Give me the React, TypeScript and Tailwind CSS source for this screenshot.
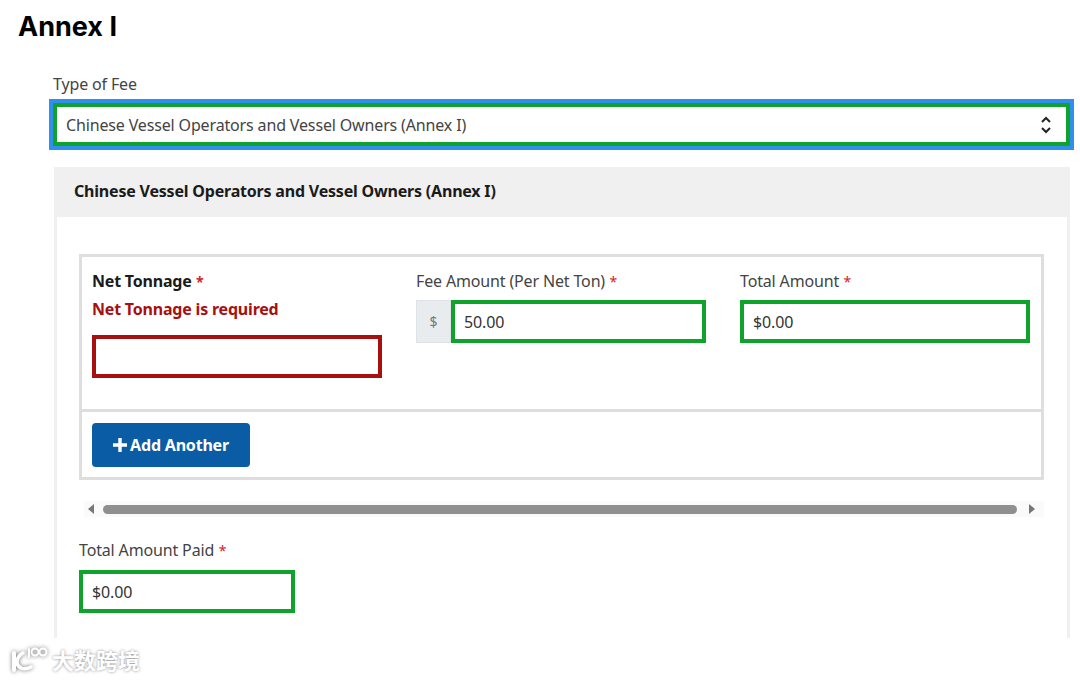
import React from "react";

const font = "font-['Noto_Sans',sans-serif]";
const greenInput =
  "flex items-center h-[43px] border-[4px] border-[#0fa32b] bg-white pl-[9px] text-[16px] tracking-[-0.15px] text-[#333]";
const plainLabel = "text-[16px] leading-[24px] tracking-[-0.15px] text-[#444]";

function Star() {
  return <span className="ml-[1px] text-[14px] leading-none text-[#d5222a]"> *</span>;
}

function Watermark() {
  return (
    <div className="absolute left-[9px] top-[645px] flex items-center gap-[3px]">
      <svg width="40" height="28" viewBox="0 0 40 28" fill="none" className="drop-shadow-[0_0_2px_#777]">
        <path d="M5 8v17" stroke="#fff" strokeWidth="4" strokeLinecap="round" />
        <path d="M14 8C7 12 6 20 12 23c3 1.500 7 0.500 10-1" stroke="#fff" strokeWidth="3.500" strokeLinecap="round" />
        <path d="M20 4v8" stroke="#fff" strokeWidth="2" strokeLinecap="round" />
        <circle cx="26" cy="7" r="3.500" stroke="#fff" strokeWidth="2" />
        <circle cx="34" cy="7" r="3.500" stroke="#fff" strokeWidth="2" />
      </svg>
      <span className="font-['Noto_Sans_CJK_SC',sans-serif] text-[22px] leading-none text-white font-bold [text-shadow:0_0_3px_#888]">
        大数跨境
      </span>
    </div>
  );
}

export default function App() {
  return (
    <div className={`relative w-[1080px] h-[680px] overflow-hidden bg-white ${font}`}>
      <h1 className="pl-[18px] pt-[11px] h-[71px] font-['Inter',sans-serif] text-[27px] leading-[32px] font-bold text-black">
        Annex I
      </h1>

      <div className="pl-[49px] pr-[6px]">
        <label className={`block pl-[4px] pt-[1px] h-[28px] ${plainLabel}`}>Type of Fee</label>
        <div className="border-[4px] border-[#2f8fee] h-[51px] w-[1025px]">
          <div className="flex items-center justify-between h-full border-[4px] border-[#0fa32b] bg-white pl-[9px] pr-[14px]">
            <span className="text-[16px] tracking-[-0.15px] text-[#444]">
              Chinese Vessel Operators and Vessel Owners (Annex I)
            </span>
            <svg width="12" height="20" viewBox="0 0 12 20" fill="none" stroke="#222" strokeWidth="2">
              <path d="M2 7l4-4 4 4M2 13l4 4 4-4" />
            </svg>
          </div>
        </div>
      </div>

      <div className="ml-[54px] mt-[17px] w-[1016px] h-[471px] border-x-[3px] border-[#f0f0f0]">
        <div className="-mx-[3px] flex items-center h-[50px] bg-[#f0f0f0] pl-[20px] pb-[2px] text-[16px] font-bold tracking-[-0.2px] text-[#1b1b1b]">
          Chinese Vessel Operators and Vessel Owners (Annex I)
        </div>

        <div className="pl-[22px] pr-[23px] pt-[37px]">
          <div className="border-[3px] border-[#dedede]">
            <div className="grid grid-cols-3 gap-x-[34px] h-[155px] pl-[10px] pr-[11px] pt-[12px] border-b-[3px] border-[#dedede]">
              <div>
                <div className="text-[16px] leading-[24px] font-bold tracking-[-0.2px] text-[#1b1b1b]">
                  Net Tonnage
                  <Star />
                </div>
                <div className="mt-[4px] text-[16px] leading-[24px] font-bold tracking-[-0.2px] text-[#a80f0f]">
                  Net Tonnage is required
                </div>
                <div className="mt-[14px] h-[43px] border-[4px] border-[#a80f0f] bg-white" />
              </div>
              <div>
                <div className={plainLabel}>
                  Fee Amount (Per Net Ton)
                  <Star />
                </div>
                <div className="mt-[7px] flex">
                  <div className="flex items-center justify-center w-[35px] h-[43px] bg-[#e9ecef] border border-[#dee2e6] text-[14px] text-[#777]">
                    $
                  </div>
                  <div className={`${greenInput} flex-1`}>50.00</div>
                </div>
              </div>
              <div>
                <div className={plainLabel}>
                  Total Amount
                  <Star />
                </div>
                <div className={`${greenInput} mt-[7px]`}>$0.00</div>
              </div>
            </div>
            <div className="flex items-center h-[65px] pl-[10px]">
              <button className="flex items-center justify-center gap-[3px] w-[158px] h-[44px] rounded-[4px] bg-[#0a5ca5] text-[16px] font-bold tracking-[-0.2px] text-white">
                <svg width="14" height="14" viewBox="0 0 14 14" fill="#fff">
                  <path d="M5.300 0h3.400v5.300H14v3.400H8.700V14H5.300V8.700H0V5.300h5.300z" />
                </svg>
                Add Another
              </button>
            </div>
          </div>

          <div className="flex items-center mt-[21px] ml-[5px] h-[16px] bg-[#fafafa] pl-[3px]">
            <svg width="8" height="10" viewBox="0 0 8 10" fill="#777">
              <path d="M7 0v10L1 5z" />
            </svg>
            <div className="h-[9px] w-[914px] ml-[8px] mr-[11px] rounded-full bg-[#8f8f8f]" />
            <svg width="8" height="10" viewBox="0 0 8 10" fill="#777">
              <path d="M1 0v10l6-5z" />
            </svg>
          </div>

          <div className={`mt-[21px] ${plainLabel}`}>
            Total Amount Paid
            <Star />
          </div>
          <div className={`${greenInput} mt-[8px] w-[216px]`}>$0.00</div>
        </div>
      </div>

      <Watermark />
    </div>
  );
}
